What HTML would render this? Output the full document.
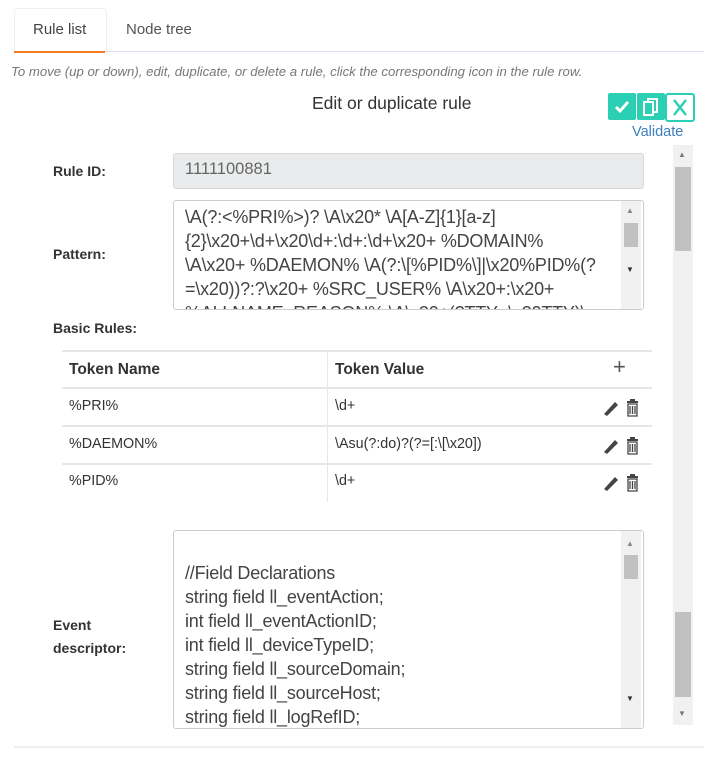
<!DOCTYPE html>
<html><head><style>
body{margin:0;width:715px;height:760px;background:#fff;font-family:"Liberation Sans",sans-serif;color:#333;position:relative;overflow:hidden}
.a{position:absolute}
.ta{border:1px solid #ccc;border-radius:3px;background:#fff;overflow:hidden}
.sb{position:absolute;right:2px;width:20px;background:#f1f1f1}
.lbl{font-weight:bold;font-size:14px;color:#333}
.txt{font-size:18px;color:#444;line-height:24px;letter-spacing:-0.2px}
.ic{position:absolute;width:28px;height:27px;background:#2bd0b4;border-radius:2px}
</style></head><body>
<div class="a" style="left:14px;top:8px;width:91px;height:44px;border:1px solid #f0f0f0;border-bottom:none;border-radius:4px 4px 0 0"></div>
<div class="a" style="left:33px;top:21px;font-size:15px;color:#444">Rule list</div>
<div class="a" style="left:126px;top:21px;font-size:15px;color:#555">Node tree</div>
<div class="a" style="left:14px;top:51px;width:690px;height:1px;background:#dde"></div>
<div class="a" style="left:14px;top:51px;width:91px;height:2px;background:#f57c20"></div>
<div class="a" style="left:11px;top:64px;font-size:13.2px;font-style:italic;color:#777">To move (up or down), edit, duplicate, or delete a rule, click the corresponding icon in the rule row.</div>
<div class="a" style="left:312px;top:93px;font-size:17.5px;color:#333">Edit or duplicate rule</div>
<div class="ic" style="left:608px;top:93px"><svg width="28" height="27"><path d="M8 14l4 4 8-9" stroke="#fff" stroke-width="3" fill="none"/></svg></div>
<div class="ic" style="left:637px;top:93px"><svg width="28" height="27"><rect x="11" y="6" width="9" height="13" fill="none" stroke="#fff" stroke-width="2"/><rect x="7" y="9" width="9" height="13" fill="#2bd0b4" stroke="#fff" stroke-width="2"/></svg></div>
<div class="a" style="left:665px;top:93px;width:26px;height:25px;border:2px solid #2bd0b4;border-radius:3px;background:#fff"><svg width="26" height="25"><path d="M7 5l12 15M19 5L7 20" stroke="#2bd0b4" stroke-width="2.5"/></svg></div>
<div class="a" style="left:632px;top:124px;font-size:14.5px;color:#3a7fc0">Validate</div>
<div class="a" style="left:673px;top:145px;width:20px;height:580px;background:#f1f1f1"></div>
<div class="a" style="left:675px;top:167px;width:16px;height:84px;background:#c1c1c1"></div>
<div class="a" style="left:675px;top:612px;width:16px;height:85px;background:#c1c1c1"></div>
<div class="a" style="left:678px;top:150px;font-size:8px;color:#777">▲</div>
<div class="a" style="left:678px;top:709px;font-size:8px;color:#777">▼</div>
<div class="a lbl" style="left:53px;top:163px">Rule ID:</div>
<div class="a" style="left:173px;top:153px;width:469px;height:34px;background:#e9ebec;border:1px solid #d8d8d8;border-radius:3px"></div>
<div class="a" style="left:185px;top:160px;font-size:16.5px;color:#666">1111100881</div>
<div class="a lbl" style="left:53px;top:246px">Pattern:</div>
<div class="a ta" style="left:173px;top:200px;width:469px;height:108px">
<div class="txt" style="position:absolute;left:11px;top:4px;width:430px;white-space:pre">\A(?:&lt;%PRI%&gt;)? \A\x20* \A[A-Z]{1}[a-z]
{2}\x20+\d+\x20\d+:\d+:\d+\x20+ %DOMAIN%
\A\x20+ %DAEMON% \A(?:\[%PID%\]|\x20%PID%(?
=\x20))?:?\x20+ %SRC_USER% \A\x20+:\x20+
%ALLNAME_REASON% \A\x20+(?TTY=\x20TTY)\</div>
<div class="sb" style="top:0;height:108px"></div>
<div class="a" style="left:450px;top:22px;width:14px;height:24px;background:#c1c1c1"></div>
<div class="a" style="left:452px;top:5px;font-size:8px;color:#888">▲</div>
<div class="a" style="left:452px;top:64px;font-size:8px;color:#333">▼</div>
</div>
<div class="a lbl" style="left:53px;top:320px">Basic Rules:</div>
<div class="a" style="left:62px;top:350px;width:590px;height:152px;font-size:14.3px">
<div class="a" style="left:0;top:0;width:590px;height:2px;background:#e6e6e6"></div>
<div class="a" style="left:0;top:37px;width:590px;height:2px;background:#e6e6e6"></div>
<div class="a" style="left:0;top:75px;width:590px;height:2px;background:#e6e6e6"></div>
<div class="a" style="left:0;top:113px;width:590px;height:2px;background:#e6e6e6"></div>
<div class="a" style="left:265px;top:0;width:1px;height:152px;background:#e6e6e6"></div>
<div class="a" style="left:7px;top:11px;font-weight:bold;font-size:15.5px">Token Name</div>
<div class="a" style="left:273px;top:11px;font-weight:bold;font-size:15.5px">Token Value</div>
<div class="a" style="left:551px;top:4px;font-size:22px;color:#555;font-weight:300">+</div>
<div class="a" style="left:7px;top:48px">%PRI%</div><div class="a" style="left:273px;top:48px">\d+</div>
<div class="a" style="left:7px;top:86px">%DAEMON%</div><div class="a" style="left:273px;top:86px">\Asu(?:do)?(?=[:\[\x20])</div>
<div class="a" style="left:7px;top:123px">%PID%</div><div class="a" style="left:273px;top:123px">\d+</div>
</div>
<svg class="a" style="left:602px;top:396px" width="40" height="100">
<g id="r"><path d="M2 18L13 6l3 3L5 20z" fill="#444"/><rect x="25" y="5" width="11" height="2" fill="#444"/><rect x="28" y="3" width="5" height="2" fill="#444"/><path d="M26 8h9v12h-9z M28 10v8M30.5 10v8M33 10v8" stroke="#444" fill="none" stroke-width="1.3"/></g>
<use href="#r" y="38"/><use href="#r" y="75"/>
</svg>
<div class="a lbl" style="left:53px;top:614px;line-height:23px">Event<br>descriptor:</div>
<div class="a ta" style="left:173px;top:530px;width:469px;height:197px">
<div class="txt" style="position:absolute;left:11px;top:30px;white-space:pre">//Field Declarations
string field ll_eventAction;
int field ll_eventActionID;
int field ll_deviceTypeID;
string field ll_sourceDomain;
string field ll_sourceHost;
string field ll_logRefID;</div>
<div class="sb" style="top:0;height:197px"></div>
<div class="a" style="left:450px;top:24px;width:14px;height:24px;background:#c1c1c1"></div>
<div class="a" style="left:452px;top:8px;font-size:8px;color:#888">▲</div>
<div class="a" style="left:452px;top:163px;font-size:8px;color:#333">▼</div>
</div>
<div class="a" style="left:14px;top:746px;width:690px;height:2px;background:#eee"></div>
</body></html>
